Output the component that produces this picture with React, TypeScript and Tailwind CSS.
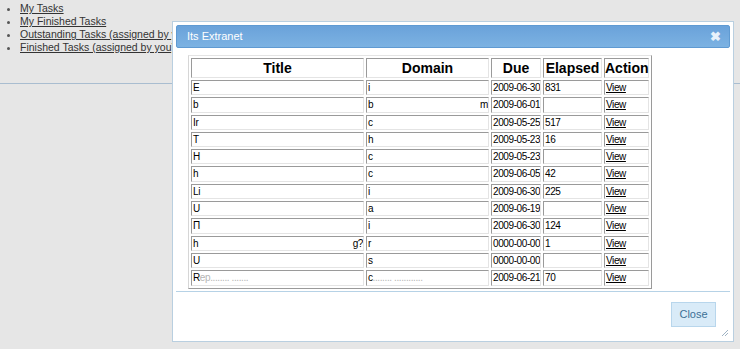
const links = [
  "My Tasks",
  "My Finished Tasks",
  "Outstanding Tasks (assigned by you)",
  "Finished Tasks (assigned by you)",
];

const rows = [
  { title: "E", titleEnd: "", domain: "i", domainEnd: "", due: "2009-06-30", elapsed: "831" },
  { title: "b", titleEnd: "", domain: "b", domainEnd: "m", due: "2009-06-01", elapsed: "" },
  { title: "Ir", titleEnd: "", domain: "c", domainEnd: "", due: "2009-05-25", elapsed: "517" },
  { title: "T", titleEnd: "", domain: "h", domainEnd: "", due: "2009-05-23", elapsed: "16" },
  { title: "H", titleEnd: "", domain: "c", domainEnd: "", due: "2009-05-23", elapsed: "" },
  { title: "h", titleEnd: "", domain: "c", domainEnd: "", due: "2009-06-05", elapsed: "42" },
  { title: "Li", titleEnd: "", domain: "i", domainEnd: "", due: "2009-06-30", elapsed: "225" },
  { title: "U", titleEnd: "", domain: "a", domainEnd: "", due: "2009-06-19", elapsed: "" },
  { title: "П", titleEnd: "", domain: "i", domainEnd: "", due: "2009-06-30", elapsed: "124" },
  { title: "h", titleEnd: "g?", domain: "r", domainEnd: "", due: "0000-00-00", elapsed: "1" },
  { title: "U", titleEnd: "", domain: "s", domainEnd: "", due: "0000-00-00", elapsed: "" },
  { title: "R", titleEnd: "", domain: "c", domainEnd: "", due: "2009-06-21", elapsed: "70" },
];

const cell =
  "border border-t-[#9a9a9a] border-l-[#9a9a9a] border-b-[#e4e4e4] border-r-[#e4e4e4] h-[15.3px] p-0 pl-[1px] align-top leading-[13px] whitespace-nowrap overflow-hidden";
const head =
  "border border-t-[#9a9a9a] border-l-[#9a9a9a] border-b-[#e4e4e4] border-r-[#e4e4e4] h-[20px] p-0 text-[14px] font-bold text-black text-center leading-[18px] tracking-normal";

export default function App() {
  return (
    <div className="relative w-[740px] h-[349px] bg-[#e6e6e6] overflow-hidden font-['Liberation_Sans',Arial,sans-serif]">
      <div className="h-[84px] border-b border-[#a9bdd0]">
        <ul className="list-disc pl-[20px] pt-[2px] text-[10.5px] leading-[13px] text-[#333] marker:text-[#555]">
          {links.map((link, index) => (
            <li key={index}>
              <a className="underline whitespace-nowrap">{link}</a>
            </li>
          ))}
        </ul>
      </div>

      {/* dialog */}
      <div className="absolute left-[172px] top-[21px] w-[562px] h-[321px] bg-white border border-[#b9cfe0] p-[3px] flex flex-col">
        <div className="h-[23px] shrink-0 rounded-[2px] bg-linear-to-b from-[#6aa2da] to-[#7cb2e2] border border-[#5f9ad2] flex items-center justify-between px-[10px]">
          <span className="text-[11px] text-white">Its Extranet</span>
          <span className="text-[13px] font-bold text-[#e8f2fb] leading-none mr-[-2px]">✖</span>
        </div>

        <div className="flex-1 pl-[12px] pt-[7px]">
          <table className="table-fixed w-[464px] border-separate border-spacing-[2px] border border-t-[#e4e4e4] border-l-[#d6d6d6] border-b-[#9a9a9a] border-r-[#9a9a9a] text-[10px] tracking-[-0.4px] text-black">
            <thead>
              <tr>
                <th className={`${head} w-[173px]`}>Title</th>
                <th className={`${head} w-[123px]`}>Domain</th>
                <th className={`${head} w-[50px]`}>Due</th>
                <th className={`${head} w-[59px]`}>Elapsed</th>
                <th className={head}>Action</th>
              </tr>
            </thead>
            <tbody>
              {rows.map((row, index) => (
                <tr key={index}>
                  <td className={cell}>
                    <div className="flex justify-between">
                      <span>
                        {row.title}
                        {index === 11 && <span className="text-[#b5b5b5]">ep........ .......</span>}
                      </span>
                      <span>{row.titleEnd}</span>
                    </div>
                  </td>
                  <td className={cell}>
                    <div className="flex justify-between">
                      <span>
                        {row.domain}
                        {index === 11 && <span className="text-[#b5b5b5]">........ ............</span>}
                      </span>
                      <span>{row.domainEnd}</span>
                    </div>
                  </td>
                  <td className={cell}>{row.due}</td>
                  <td className={cell}>{row.elapsed}</td>
                  <td className={cell}>
                    <a className="underline">View</a>
                  </td>
                </tr>
              ))}
            </tbody>
          </table>
        </div>

        <div className="h-[47px] shrink-0 border-t border-[#b6d2e6] flex items-start justify-end pt-[10px] pr-[14px] relative">
          <button className="w-[45px] h-[25px] bg-[#d9ebf8] border border-[#b8d6ec] text-[11px] text-[#3c6f96]">
            Close
          </button>
          <svg className="absolute right-[1px] bottom-[1px]" width="8" height="8" viewBox="0 0 8 8">
            <path d="M7 1 L1 7 M7 4 L4 7 M7 7 L7 7" stroke="#9fb3c4" strokeWidth="1" />
          </svg>
        </div>
      </div>
    </div>
  );
}
